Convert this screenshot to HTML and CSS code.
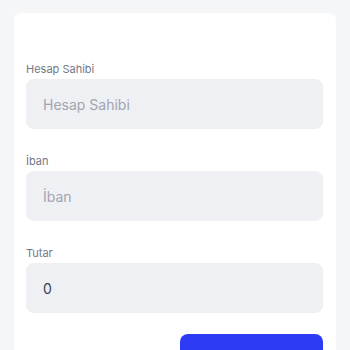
FILE: index.html
```html
<!doctype html>
<html lang="tr">
<head>
  <meta charset="UTF-8">
  <meta name="viewport" content="width=device-width, initial-scale=1.0">
  <title>Para Çekme</title>
  <link rel="stylesheet" href="styles.css">
</head>
<body>
<form class="card">
  <label class="field">
    <span class="field__label">Hesap Sahibi</span>
    <input class="field__input" type="text" placeholder="Hesap Sahibi">
  </label>

  <label class="field">
    <span class="field__label">İban</span>
    <input class="field__input" type="text" placeholder="İban">
  </label>

  <label class="field">
    <span class="field__label">Tutar</span>
    <input class="field__input" type="text" value="0">
  </label>

  <div class="actions">
    <button class="btn" type="submit">Gönder</button>
  </div>
</form>
</body>
</html>
```

FILE: styles.css
```css
body {
  margin: 0;
  padding: 13px 14px;
  background: #f5f6f8;
  font-family: Inter, "Noto Sans", sans-serif;
}

.card {
  display: flex;
  flex-direction: column;
  gap: 24px;
  padding: 48px 13px 20px 12px;
  background: #fff;
  border-radius: 7px;
}

/* Field */

.field {
  display: flex;
  flex-direction: column;
  gap: 2px;
}

.field__label {
  font-size: 11px;
  line-height: 16px;
  color: #737786;
}

.field__input {
  box-sizing: border-box;
  height: 50px;
  padding: 0 17px;
  border: 0;
  border-radius: 8px;
  background: #eff0f4;
  font: inherit;
  font-size: 14px;
  color: #374151;
  outline: none;
}

.field__input::placeholder {
  color: #a2a5b0;
}

/* Actions */

.actions {
  display: flex;
  justify-content: flex-end;
  margin-top: -3px;
}

.btn {
  width: 143px;
  height: 52px;
  border: 0;
  border-radius: 8px;
  background: #2e3bf5;
  color: #fff;
  font: inherit;
  font-size: 14px;
  font-weight: 600;
}
```
